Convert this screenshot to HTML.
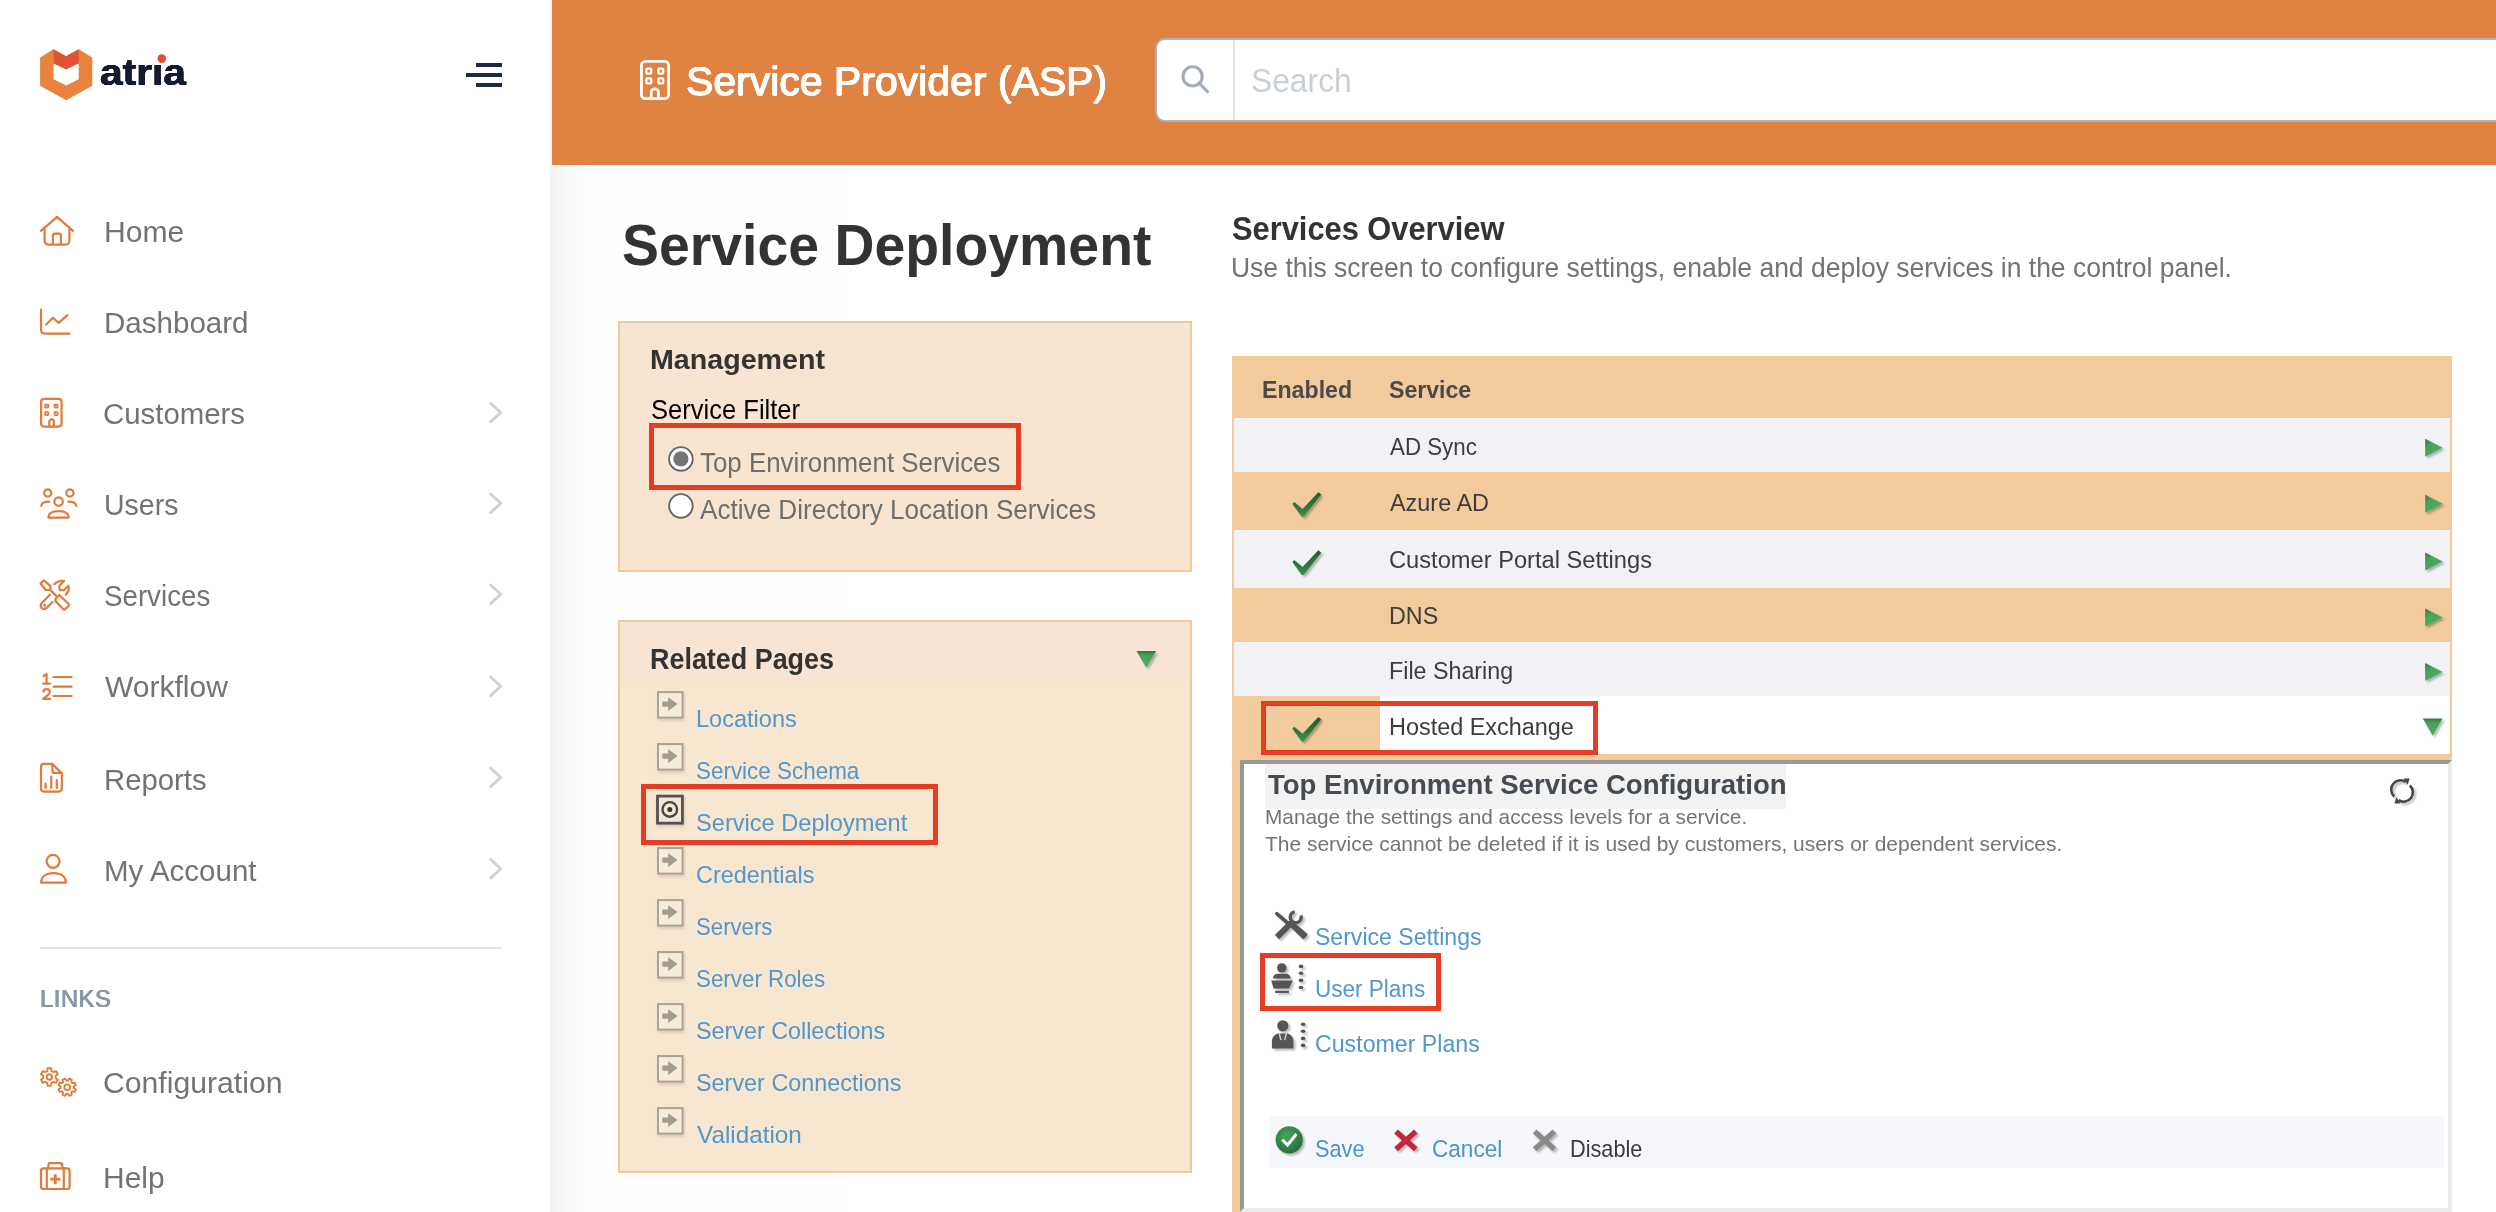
<!DOCTYPE html>
<html>
<head>
<meta charset="utf-8">
<style>
html,body{margin:0;padding:0;}
body{width:2496px;height:1212px;overflow:hidden;position:relative;background:#ffffff;font-family:"Liberation Sans",sans-serif;}
.a{position:absolute;box-sizing:border-box;}
.t{position:absolute;white-space:nowrap;transform-origin:0 0;font-family:"Liberation Sans",sans-serif;}
svg{position:absolute;overflow:visible;}
.red{position:absolute;box-sizing:border-box;border:5px solid #e53d24;}
</style>
</head>
<body>
<!-- sidebar -->
<div class="a" style="left:0;top:0;width:550px;height:1212px;background:#ffffff;"></div>
<!-- main bg -->
<div class="a" style="left:550px;top:165px;width:1946px;height:1047px;background:linear-gradient(to right,#f1f2f5 0px,#f5f6f7 8px,#f9fafa 20px,#fcfcfc 32px,#fefefe 44px,#ffffff 300px,#ffffff 100%);"></div>
<!-- header -->
<div class="a" style="left:550px;top:0;width:2px;height:165px;background:#f0f1f3;"></div>
<div class="a" style="left:552px;top:0;width:1944px;height:165px;background:#e08242;"></div>
<!-- search -->
<div class="a" style="left:1155px;top:38px;width:1400px;height:84px;background:#ffffff;border:2px solid #a9b3be;border-radius:10px 0 0 10px;"></div>
<div class="a" style="left:1233px;top:40px;width:2px;height:80px;background:#e0e4e9;"></div>

<svg width="2496" height="1212" style="left:0;top:0;" viewBox="0 0 2496 1212">
<!-- logo -->
<polygon points="40.1,57.6 53.5,49.2 66.1,56.3 78.7,49.2 92.3,57.6 92.3,85.8 66.1,100.3 40.1,85.8" fill="#e8823c"/>
<polygon points="53.5,49.2 66.1,56.3 78.7,49.2 78.7,63.5 66.1,69.6 53.5,63.5" fill="#df5233"/>
<polygon points="53.5,63.5 66.1,69.6 78.7,63.5 78.7,79.2 66.1,85.6 53.5,79.2" fill="#ffffff"/>
<circle cx="161.8" cy="58.6" r="4.3" fill="#e05035"/>
<!-- hamburger -->
<rect x="476" y="63" width="26" height="4" fill="#1c2a44"/>
<rect x="466" y="73" width="36" height="4" fill="#1c2a44"/>
<rect x="476" y="83" width="26" height="4" fill="#1c2a44"/>
<g fill="none" stroke="#e07b39" stroke-width="2.2" stroke-linecap="round" stroke-linejoin="round">
<!-- home -->
<path d="M41,230.8 L57,216.8 L73,230.8 M44.6,227 V240.6 Q44.6,244.6 48.6,244.6 H65.4 Q69.4,244.6 69.4,240.6 V227 M52.9,244.6 V235.4 Q52.9,233.6 54.7,233.6 H59.1 Q60.9,233.6 60.9,235.4 V244.6"/>
<!-- dashboard -->
<path d="M41,309.6 V329.5 Q41,333.6 45.1,333.6 H69.6 M46.3,324.6 L52.9,317.8 L58.5,322.8 L67.5,315.1"/>
<!-- customers -->
<rect x="41.1" y="398.8" width="20.4" height="27.8" rx="3"/>
<rect x="45.2" y="404.6" width="3" height="3" rx="0.5" stroke-width="1.9"/>
<rect x="54.6" y="404.6" width="3" height="3" rx="0.5" stroke-width="1.9"/>
<rect x="45.2" y="412.1" width="3" height="3" rx="0.5" stroke-width="1.9"/>
<rect x="54.6" y="412.1" width="3" height="3" rx="0.5" stroke-width="1.9"/>
<path d="M49.3,426.6 V421.7 A2.3,2.3 0 0 1 53.9,421.7 V426.6"/>
<!-- users -->
<circle cx="58.6" cy="501.5" r="4.2"/>
<circle cx="47.7" cy="493" r="3.6"/>
<circle cx="69.9" cy="493" r="3.6"/>
<path d="M41.2,505.8 Q41.6,501.6 49.2,501.6 M76.3,505.8 Q75.9,501.6 68.3,501.6"/>
<path d="M48.4,517.6 C48.4,513.3 52.6,511.2 58.6,511.2 C64.6,511.2 68.8,513.3 68.8,517.6 Z"/>
<!-- services tools -->
<path d="M40.6,583.6 L43.8,580.4 L50.4,585.9 L50.4,590 L45.8,590 Z M50.4,590 L56,595.6"/>
<path d="M59.3,595 L68.9,604.3 Q69.6,605 68.9,605.7 L64.9,609.4 Q64.2,610 63.5,609.4 L56.2,601.8 Q54.6,600 56.1,598.3 L57.5,596.9 Q58.4,596 59.3,595 Z"/>
<path d="M54.2,584.2 Q57.6,580.7 64,580.9 L59.2,585.9 L59.8,590.2 L63.8,590.2 L68.3,585.7 Q70.1,591 65.8,594.7"/>
<path d="M50.1,594.6 L41.8,603 Q39.7,605.6 41.6,607.8 Q44,610.2 46.6,607.9 L52.4,601.9"/>
<circle cx="44.6" cy="605.2" r="0.7" stroke-width="1.6"/>
<!-- workflow -->
<path d="M43.6,676 L46.6,673.9 V683.6 M43.2,683.6 H50 M43.4,691.6 Q43.8,689.2 46.6,689.2 Q49.8,689.2 49.8,691.9 Q49.8,693.6 47.8,695.2 L43.2,698.9 H50.2 M53.6,677 H71.6 M53.6,686.6 H71.6 M53.6,696 H71.6"/>
<!-- reports -->
<path d="M41,766.9 Q41,763.9 44,763.9 H52.3 L61.8,773.4 V788.6 Q61.8,791.6 58.8,791.6 H44 Q41,791.6 41,788.6 Z M52.3,763.9 V770.4 Q52.3,772.9 54.8,772.9 H61.8 M45.6,783.6 V788 M51.3,776.6 V788 M56.8,780.2 V788"/>
<!-- my account -->
<circle cx="53.1" cy="861.3" r="6.5"/>
<path d="M41.1,882.6 C41.1,876.6 46,873.1 53.5,873.1 C61,873.1 65.9,876.6 65.9,882.6 Z"/>
<!-- configuration -->
<path stroke-width="1.9" d="M47.27,1070.97 L47.63,1068.28 L51.17,1068.28 L51.53,1070.97 L53.56,1072.14 L56.07,1071.11 L57.84,1074.17 L55.69,1075.83 L55.69,1078.17 L57.84,1079.83 L56.07,1082.89 L53.56,1081.86 L51.53,1083.03 L51.17,1085.72 L47.63,1085.72 L47.27,1083.03 L45.24,1081.86 L42.73,1082.89 L40.96,1079.83 L43.11,1078.17 L43.11,1075.83 L40.96,1074.17 L42.73,1071.11 L45.24,1072.14 Z"/>
<circle cx="49.4" cy="1077" r="2.7" stroke-width="1.9"/>
<path stroke-width="1.9" d="M67.91,1080.64 L69.38,1078.57 L71.76,1079.56 L71.34,1082.06 L72.34,1083.06 L74.84,1082.64 L75.83,1085.02 L73.76,1086.49 L73.76,1087.91 L75.83,1089.38 L74.84,1091.76 L72.34,1091.34 L71.34,1092.34 L71.76,1094.84 L69.38,1095.83 L67.91,1093.76 L66.49,1093.76 L65.02,1095.83 L62.64,1094.84 L63.06,1092.34 L62.06,1091.34 L59.56,1091.76 L58.57,1089.38 L60.64,1087.91 L60.64,1086.49 L58.57,1085.02 L59.56,1082.64 L62.06,1083.06 L63.06,1082.06 L62.64,1079.56 L65.02,1078.57 L66.49,1080.64 Z"/>
<circle cx="67.2" cy="1087.2" r="2.8" stroke-width="1.9"/>
<!-- help -->
<rect x="41" y="1168.4" width="28.6" height="20.6" rx="2.6"/>
<path d="M48.4,1168.4 V1165 Q48.4,1163.2 50.2,1163.2 H60.4 Q62.2,1163.2 62.2,1165 V1168.4 M46.8,1168.4 V1189 M63.8,1168.4 V1189"/>
<path stroke-width="2.8" stroke-linecap="butt" d="M55.3,1174.2 V1184.2 M50.3,1179.2 H60.3"/>
</g>
<!-- chevrons -->
<g fill="none" stroke="#cdd1d8" stroke-width="2.9" stroke-linecap="round" stroke-linejoin="round">
<path d="M490.6,403.2 L500.8,412.5 L490.6,421.8"/>
<path d="M490.6,494 L500.8,503.3 L490.6,512.6"/>
<path d="M490.6,585 L500.8,594.3 L490.6,603.6"/>
<path d="M490.6,677 L500.8,686.3 L490.6,695.6"/>
<path d="M490.6,768.1 L500.8,777.4 L490.6,786.7"/>
<path d="M490.6,859.4 L500.8,868.7 L490.6,878"/>
</g>
<!-- divider -->
<rect x="40" y="947" width="462" height="2" fill="#e4e6ea"/>
<!-- header building icon -->
<g fill="none" stroke="#ffffff" stroke-width="2.8" stroke-linejoin="round">
<rect x="641.4" y="61.4" width="27.2" height="37.2" rx="4"/>
<rect x="646.4" y="68.6" width="4.8" height="5" rx="1" stroke-width="2.4"/>
<rect x="658.4" y="68.6" width="4.8" height="5" rx="1" stroke-width="2.4"/>
<rect x="646.4" y="78.4" width="4.8" height="5" rx="1" stroke-width="2.4"/>
<rect x="658.4" y="78.4" width="4.8" height="5" rx="1" stroke-width="2.4"/>
<path d="M651.2,98.6 V92.4 A3.6,3.6 0 0 1 658.4,92.4 V98.6"/>
</g>
<!-- search icon -->
<g fill="none" stroke="#a3adb8" stroke-width="3.1" stroke-linecap="round">
<circle cx="1192.6" cy="76.4" r="9.6"/>
<path d="M1200,84 L1207.4,91.6"/>
</g>
</svg>

<!-- management box -->
<div class="a" style="left:618px;top:321px;width:574px;height:251px;background:#f7e5d2;border:2px solid #f1ca9c;"></div>
<!-- related box -->
<div class="a" style="left:618px;top:620px;width:574px;height:553px;background:#f7e6d0;border:2px solid #f1ca9c;"></div>
<div class="a" style="left:620px;top:622px;width:570px;height:59px;background:#f7e4d4;"></div>

<!-- table -->
<div class="a" style="left:1232px;top:356px;width:1220px;height:404px;background:#f2ca9c;"></div>
<div class="a" style="left:1232px;top:760px;width:8px;height:452px;background:#f1ca9c;"></div>
<div class="a" style="left:1234px;top:418px;width:1216px;height:54px;background:#f2f2f6;"></div>
<div class="a" style="left:1234px;top:530px;width:1216px;height:58px;background:#f2f2f6;"></div>
<div class="a" style="left:1234px;top:642px;width:1216px;height:54px;background:#f2f2f6;"></div>
<div class="a" style="left:1380px;top:696px;width:1070px;height:58px;background:#ffffff;"></div>

<!-- config panel -->
<div class="a" style="left:1240px;top:760px;width:1212px;height:452px;background:#ffffff;border-style:solid;border-width:4px;border-color:#999999 #ebebeb #ebebeb #999999;"></div>
<div class="a" style="left:1265px;top:764px;width:521px;height:45px;background:#f2f2f2;"></div>
<div class="a" style="left:1269px;top:1116px;width:1175px;height:52px;background:#f6f7fb;"></div>

<svg width="2496" height="1212" style="left:0;top:0;" viewBox="0 0 2496 1212">
<defs>
<filter id="sh" x="-50%" y="-50%" width="200%" height="200%"><feGaussianBlur in="SourceAlpha" stdDeviation="1.2"/><feOffset dx="1.5" dy="2" result="b"/><feComponentTransfer><feFuncA type="linear" slope="0.28"/></feComponentTransfer><feMerge><feMergeNode/><feMergeNode in="SourceGraphic"/></feMerge></filter>
<linearGradient id="gtri" x1="0" y1="0" x2="0" y2="1"><stop offset="0" stop-color="#2f7a3e"/><stop offset="0.25" stop-color="#46a158"/><stop offset="1" stop-color="#52ab62"/></linearGradient>
<linearGradient id="gtri2" x1="0" y1="0" x2="1" y2="1"><stop offset="0" stop-color="#2f7a3e"/><stop offset="0.3" stop-color="#49a35a"/><stop offset="1" stop-color="#52ab62"/></linearGradient>
<linearGradient id="gchk" x1="0" y1="0" x2="0" y2="1"><stop offset="0" stop-color="#1d5a2b"/><stop offset="0.6" stop-color="#2c7a3b"/><stop offset="1" stop-color="#3a8f48"/></linearGradient>
<radialGradient id="gsave" cx="0.4" cy="0.35" r="0.7"><stop offset="0" stop-color="#46a35a"/><stop offset="1" stop-color="#23703a"/></radialGradient>
<filter id="sh2" x="-50%" y="-50%" width="200%" height="200%"><feGaussianBlur in="SourceAlpha" stdDeviation="1.5"/><feOffset dx="1" dy="1.5" result="b"/><feComponentTransfer><feFuncA type="linear" slope="0.14"/></feComponentTransfer><feMerge><feMergeNode/><feMergeNode in="SourceGraphic"/></feMerge></filter>
</defs>
<!-- radios -->
<circle cx="680.9" cy="458.9" r="11.8" fill="#ffffff" stroke="#666666" stroke-width="1.9"/>
<circle cx="680.9" cy="458.9" r="7.6" fill="#747474"/>
<circle cx="680.9" cy="505.9" r="11.8" fill="#ffffff" stroke="#666666" stroke-width="1.9"/>
<!-- related header triangle -->
<polygon points="1136.5,651.1 1156.1,651.1 1146.3,667.8" fill="url(#gtri)" filter="url(#sh)"/>
<!-- related page icons -->
<g>
<rect x="658" y="692.1" width="24.6" height="25.5" fill="#f6ecdc" stroke="#aba195" stroke-width="2" filter="url(#sh2)"/>
<path d="M662.4,701.6 H668.2 V697.2 L677.6,704.1 L668.2,711 V706.8 H662.4 Z" fill="#a39a8e"/>
</g>
<g transform="translate(0,52)">
<rect x="658" y="692.1" width="24.6" height="25.5" fill="#f6ecdc" stroke="#aba195" stroke-width="2" filter="url(#sh2)"/>
<path d="M662.4,701.6 H668.2 V697.2 L677.6,704.1 L668.2,711 V706.8 H662.4 Z" fill="#a39a8e"/>
</g>
<g transform="translate(0,156)">
<rect x="658" y="692.1" width="24.6" height="25.5" fill="#f6ecdc" stroke="#aba195" stroke-width="2" filter="url(#sh2)"/>
<path d="M662.4,701.6 H668.2 V697.2 L677.6,704.1 L668.2,711 V706.8 H662.4 Z" fill="#a39a8e"/>
</g>
<g transform="translate(0,208)">
<rect x="658" y="692.1" width="24.6" height="25.5" fill="#f6ecdc" stroke="#aba195" stroke-width="2" filter="url(#sh2)"/>
<path d="M662.4,701.6 H668.2 V697.2 L677.6,704.1 L668.2,711 V706.8 H662.4 Z" fill="#a39a8e"/>
</g>
<g transform="translate(0,260)">
<rect x="658" y="692.1" width="24.6" height="25.5" fill="#f6ecdc" stroke="#aba195" stroke-width="2" filter="url(#sh2)"/>
<path d="M662.4,701.6 H668.2 V697.2 L677.6,704.1 L668.2,711 V706.8 H662.4 Z" fill="#a39a8e"/>
</g>
<g transform="translate(0,312)">
<rect x="658" y="692.1" width="24.6" height="25.5" fill="#f6ecdc" stroke="#aba195" stroke-width="2" filter="url(#sh2)"/>
<path d="M662.4,701.6 H668.2 V697.2 L677.6,704.1 L668.2,711 V706.8 H662.4 Z" fill="#a39a8e"/>
</g>
<g transform="translate(0,364)">
<rect x="658" y="692.1" width="24.6" height="25.5" fill="#f6ecdc" stroke="#aba195" stroke-width="2" filter="url(#sh2)"/>
<path d="M662.4,701.6 H668.2 V697.2 L677.6,704.1 L668.2,711 V706.8 H662.4 Z" fill="#a39a8e"/>
</g>
<g transform="translate(0,416)">
<rect x="658" y="692.1" width="24.6" height="25.5" fill="#f6ecdc" stroke="#aba195" stroke-width="2" filter="url(#sh2)"/>
<path d="M662.4,701.6 H668.2 V697.2 L677.6,704.1 L668.2,711 V706.8 H662.4 Z" fill="#a39a8e"/>
</g>

<rect x="657.5" y="796.1" width="24.9" height="27.1" fill="#f2e6d6" stroke="#525252" stroke-width="2.8" filter="url(#sh2)"/>
<circle cx="669.8" cy="809.4" r="7.3" fill="none" stroke="#474747" stroke-width="2.4"/>
<circle cx="669.8" cy="809.4" r="2.5" fill="#333"/>
<!-- table checks -->
<g fill="url(#gchk)" filter="url(#sh)">
<polygon points="1292.4,504.0 1294.2,501.9 1302.5,509.0 1318.4,492.2 1321.2,494.6 1303.6,516.8 1301.8,516.8"/>
<polygon points="1292.4,562.1 1294.2,560.0 1302.5,567.1 1318.4,550.3 1321.2,552.7 1303.6,574.9 1301.8,574.9"/>
<polygon points="1292.4,728.8 1294.2,726.7 1302.5,733.8 1318.4,717.0 1321.2,719.4 1303.6,741.6 1301.8,741.6"/>
</g>
<!-- row triangles -->
<g fill="url(#gtri2)" filter="url(#sh)">
<polygon points="2425.2,438.8 2442.7,447.8 2425.2,456.8"/>
<polygon points="2425.2,494.8 2442.7,503.8 2425.2,512.8"/>
<polygon points="2425.2,552.6 2442.7,561.6 2425.2,570.6"/>
<polygon points="2425.2,608.6 2442.7,617.6 2425.2,626.6"/>
<polygon points="2425.2,663 2442.7,672 2425.2,681"/>
</g>
<polygon points="2422.8,718.6 2442.6,718.6 2432.7,735.8" fill="url(#gtri)" filter="url(#sh)"/>
<!-- refresh -->
<g fill="none" stroke="#474747" stroke-width="2.6" filter="url(#sh)">
<path d="M2394.2,796.5 A9.3,9.3 0 0 1 2405.5,781.8"/>
<path d="M2409.8,785.5 A9.3,9.3 0 0 1 2398.5,800.2"/>
</g>
<g fill="#474747">
<polygon points="2403.5,778.6 2409.6,778.6 2407.6,784.8"/>
<polygon points="2400.5,803.4 2394.4,803.4 2396.4,797.2"/>
</g>
<!-- config link icons -->
<g fill="#555555" stroke="none" filter="url(#sh)">
<!-- screwdriver -->
<path d="M1276.8,913.6 L1290.6,925.6" fill="none" stroke="#555555" stroke-width="3.6" stroke-linecap="round"/>
<path d="M1289.6,926.2 L1293.4,921.8 L1306.8,933.6 Q1307.8,934.6 1306.8,935.8 L1304.4,938.6 Q1303.4,939.6 1302.3,938.6 Z"/>
<!-- wrench -->
<path d="M1274.9,935 L1289.4,920.6 L1293.6,924.8 L1279.1,939.2 Z"/>
<path d="M1300.9,915.4 A5.5,5.5 0 1 1 1294.65,911.8" fill="none" stroke="#555555" stroke-width="3.3"/>
<!-- user plans -->
<circle cx="1281.8" cy="967.9" r="4.7"/>
<path d="M1272.9,978.4 Q1273.4,973.9 1278,973.7 H1285.6 Q1290.2,973.9 1290.6,978.4 Z"/>
<path d="M1271.2,980.6 H1292.9 L1289,988.4 H1273.6 Z"/>
<rect x="1275.2" y="990.8" width="13.7" height="2.2"/>
<ellipse cx="1301" cy="966.4" rx="2.3" ry="1.8"/>
<ellipse cx="1301" cy="973.3" rx="2.3" ry="1.8"/>
<ellipse cx="1301" cy="980.4" rx="2.3" ry="1.8"/>
<ellipse cx="1301" cy="987.5" rx="2.3" ry="1.8"/>
<!-- customer plans -->
<circle cx="1282.8" cy="1025.8" r="5.6"/>
<path d="M1271.9,1048.6 V1041.5 Q1272,1035.2 1277.8,1033.4 H1287.8 Q1293.4,1035.2 1293.4,1041.5 V1048.6 Z"/>
<ellipse cx="1303.1" cy="1024.2" rx="2.3" ry="1.8"/>
<ellipse cx="1303.1" cy="1031.3" rx="2.3" ry="1.8"/>
<ellipse cx="1303.1" cy="1038.4" rx="2.3" ry="1.8"/>
<ellipse cx="1303.1" cy="1045.4" rx="2.3" ry="1.8"/>
</g>
<path d="M1279.2,1033.2 L1280.9,1040.2 M1286.4,1033.2 L1284.7,1040.2" fill="none" stroke="#d8d8d8" stroke-width="1.4"/>
<path d="M1280.6,1024 Q1282.8,1022.5 1285,1024" fill="none" stroke="#6a6a6a" stroke-width="0.8"/>
<!-- save / cancel / disable -->
<g filter="url(#sh)">
<circle cx="1289.2" cy="1139.8" r="13.6" fill="url(#gsave)"/>
<path d="M1282.3,1139.6 L1287.6,1145 L1296.4,1134" fill="none" stroke="#ffffff" stroke-width="3"/>
<path d="M1396,1131.4 L1415.8,1149.2 M1415.8,1131.4 L1396,1149.2" fill="none" stroke="#c2283c" stroke-width="5.4"/>
<path d="M1534.6,1131.4 L1554.4,1149.2 M1554.4,1131.4 L1534.6,1149.2" fill="none" stroke="#8a8a8a" stroke-width="5.4"/>
</g>
</svg>

<!-- red highlight boxes -->
<div class="red" style="left:649px;top:423px;width:372px;height:67px;"></div>
<div class="red" style="left:641px;top:784px;width:297px;height:61px;"></div>
<div class="red" style="left:1261px;top:701px;width:337px;height:54px;"></div>
<div class="red" style="left:1260px;top:953px;width:181px;height:58px;"></div>

<div class="t" id="nav_home" style="left:103.58px;top:217.00px;font-size:29.28px;line-height:29.28px;font-weight:400;color:#737373;transform:scaleX(1.0290);">Home</div>
<div class="t" id="nav_dash" style="left:103.64px;top:308.00px;font-size:29.57px;line-height:29.57px;font-weight:400;color:#737373;transform:scaleX(0.9992);">Dashboard</div>
<div class="t" id="nav_cust" style="left:103.48px;top:399.00px;font-size:29.86px;line-height:29.86px;font-weight:400;color:#737373;transform:scaleX(0.9839);">Customers</div>
<div class="t" id="nav_users" style="left:104.11px;top:490.00px;font-size:29.57px;line-height:29.57px;font-weight:400;color:#737373;transform:scaleX(0.9635);">Users</div>
<div class="t" id="nav_serv" style="left:104.27px;top:581.00px;font-size:29.57px;line-height:29.57px;font-weight:400;color:#737373;transform:scaleX(0.9373);">Services</div>
<div class="t" id="nav_work" style="left:105.28px;top:672.00px;font-size:29.57px;line-height:29.57px;font-weight:400;color:#737373;transform:scaleX(1.0157);">Workflow</div>
<div class="t" id="nav_rep" style="left:103.55px;top:765.00px;font-size:29.57px;line-height:29.57px;font-weight:400;color:#737373;transform:scaleX(0.9919);">Reports</div>
<div class="t" id="nav_acc" style="left:103.54px;top:856.00px;font-size:29.57px;line-height:29.57px;font-weight:400;color:#737373;transform:scaleX(0.9981);">My Account</div>
<div class="t" id="links" style="left:40.25px;top:988.00px;font-size:23.04px;line-height:23.04px;font-weight:400;color:#8798ab;transform:scaleX(1.0331);text-shadow:0.45px 0 0 #8798ab,-0.45px 0 0 #8798ab,0 0.3px 0 #8798ab,0 -0.3px 0 #8798ab;letter-spacing:0.5px;">LINKS</div>
<div class="t" id="nav_conf" style="left:103.44px;top:1068.00px;font-size:29.86px;line-height:29.86px;font-weight:400;color:#737373;transform:scaleX(1.0103);">Configuration</div>
<div class="t" id="nav_help" style="left:103.00px;top:1163.00px;font-size:29.57px;line-height:29.57px;font-weight:400;color:#737373;transform:scaleX(1.0132);">Help</div>
<div class="t" id="hdr" style="left:686.02px;top:60.00px;font-size:41.45px;line-height:41.45px;font-weight:400;color:#ffffff;transform:scaleX(0.9884);text-shadow:0.5px 0 0 #ffffff,-0.5px 0 0 #ffffff,0 0.5px 0 #ffffff,0 -0.5px 0 #ffffff,0.35px 0.35px 0 #ffffff,-0.35px -0.35px 0 #ffffff,0.35px -0.35px 0 #ffffff,-0.35px 0.35px 0 #ffffff;">Service Provider (ASP)</div>
<div class="t" id="search" style="left:1250.78px;top:65.00px;font-size:32.90px;line-height:32.90px;font-weight:400;color:#c9cfd7;transform:scaleX(0.9663);">Search</div>
<div class="t" id="title" style="left:621.70px;top:217.00px;font-size:57.97px;line-height:57.97px;font-weight:700;color:#333333;transform:scaleX(0.9554);">Service Deployment</div>
<div class="t" id="mgmt" style="left:649.78px;top:345.00px;font-size:28.55px;line-height:28.55px;font-weight:700;color:#333333;transform:scaleX(1.0029);">Management</div>
<div class="t" id="filter" style="left:651.22px;top:396.00px;font-size:27.97px;line-height:27.97px;font-weight:400;color:#000000;transform:scaleX(0.9133);">Service Filter</div>
<div class="t" id="radio1" style="left:700.00px;top:449.00px;font-size:27.25px;line-height:27.25px;font-weight:400;color:#6e6e6e;transform:scaleX(0.9491);">Top Environment Services</div>
<div class="t" id="radio2" style="left:699.95px;top:496.00px;font-size:27.54px;line-height:27.54px;font-weight:400;color:#6e6e6e;transform:scaleX(0.9481);">Active Directory Location Services</div>
<div class="t" id="related" style="left:649.59px;top:645.00px;font-size:28.99px;line-height:28.99px;font-weight:700;color:#333333;transform:scaleX(0.9286);">Related Pages</div>
<div class="t" id="rel0" style="left:695.50px;top:707.00px;font-size:24.78px;line-height:24.78px;font-weight:400;color:#5297cb;transform:scaleX(0.9509);">Locations</div>
<div class="t" id="rel1" style="left:695.68px;top:759.00px;font-size:24.78px;line-height:24.78px;font-weight:400;color:#5297cb;transform:scaleX(0.9057);">Service Schema</div>
<div class="t" id="rel2" style="left:695.60px;top:811.00px;font-size:24.78px;line-height:24.78px;font-weight:400;color:#5297cb;transform:scaleX(0.9534);">Service Deployment</div>
<div class="t" id="rel3" style="left:695.79px;top:863.00px;font-size:24.78px;line-height:24.78px;font-weight:400;color:#5297cb;transform:scaleX(0.9455);">Credentials</div>
<div class="t" id="rel4" style="left:695.70px;top:915.00px;font-size:24.78px;line-height:24.78px;font-weight:400;color:#5297cb;transform:scaleX(0.8958);">Servers</div>
<div class="t" id="rel5" style="left:695.69px;top:967.00px;font-size:24.78px;line-height:24.78px;font-weight:400;color:#5297cb;transform:scaleX(0.9026);">Server Roles</div>
<div class="t" id="rel6" style="left:695.62px;top:1019.00px;font-size:24.78px;line-height:24.78px;font-weight:400;color:#5297cb;transform:scaleX(0.9415);">Server Collections</div>
<div class="t" id="rel7" style="left:695.61px;top:1071.00px;font-size:24.78px;line-height:24.78px;font-weight:400;color:#5297cb;transform:scaleX(0.9445);">Server Connections</div>
<div class="t" id="rel8" style="left:696.61px;top:1123.00px;font-size:24.78px;line-height:24.78px;font-weight:400;color:#5297cb;transform:scaleX(0.9805);">Validation</div>
<div class="t" id="so" style="left:1231.57px;top:212.00px;font-size:33.33px;line-height:33.33px;font-weight:700;color:#333333;transform:scaleX(0.9247);">Services Overview</div>
<div class="t" id="sub" style="left:1231.15px;top:254.00px;font-size:27.54px;line-height:27.54px;font-weight:400;color:#737373;transform:scaleX(0.9618);">Use this screen to configure settings, enable and deploy services in the control panel.</div>
<div class="t" id="th1" style="left:1261.94px;top:378.00px;font-size:24.64px;line-height:24.64px;font-weight:700;color:#4a4a4a;transform:scaleX(0.9408);">Enabled</div>
<div class="t" id="th2" style="left:1389.08px;top:378.00px;font-size:24.64px;line-height:24.64px;font-weight:700;color:#4a4a4a;transform:scaleX(0.9380);">Service</div>
<div class="t" id="row0" style="left:1389.98px;top:435.00px;font-size:24.64px;line-height:24.64px;font-weight:400;color:#3d3d3d;transform:scaleX(0.9064);">AD Sync</div>
<div class="t" id="row1" style="left:1389.95px;top:491.00px;font-size:24.64px;line-height:24.64px;font-weight:400;color:#3d3d3d;transform:scaleX(0.9513);">Azure AD</div>
<div class="t" id="row2" style="left:1389.07px;top:548.00px;font-size:24.64px;line-height:24.64px;font-weight:400;color:#3d3d3d;transform:scaleX(0.9608);">Customer Portal Settings</div>
<div class="t" id="row3" style="left:1388.81px;top:604.00px;font-size:24.64px;line-height:24.64px;font-weight:400;color:#3d3d3d;transform:scaleX(0.9455);">DNS</div>
<div class="t" id="row4" style="left:1388.81px;top:659.00px;font-size:24.64px;line-height:24.64px;font-weight:400;color:#3d3d3d;transform:scaleX(0.9446);">File Sharing</div>
<div class="t" id="row5" style="left:1388.80px;top:715.00px;font-size:24.64px;line-height:24.64px;font-weight:400;color:#3d3d3d;transform:scaleX(0.9507);">Hosted Exchange</div>
<div class="t" id="ctitle" style="left:1267.95px;top:770.00px;font-size:28.41px;line-height:28.41px;font-weight:700;color:#444b52;transform:scaleX(0.9702);">Top Environment Service Configuration</div>
<div class="t" id="desc1" style="left:1265.01px;top:806.00px;font-size:21.01px;line-height:21.01px;font-weight:400;color:#747474;transform:scaleX(0.9906);">Manage the settings and access levels for a service.</div>
<div class="t" id="desc2" style="left:1265.48px;top:834.00px;font-size:20.87px;line-height:20.87px;font-weight:400;color:#747474;transform:scaleX(1.0054);">The service cannot be deleted if it is used by customers, users or dependent services.</div>
<div class="t" id="cl1" style="left:1315.02px;top:925.00px;font-size:24.49px;line-height:24.49px;font-weight:400;color:#5297cb;transform:scaleX(0.9413);">Service Settings</div>
<div class="t" id="cl2" style="left:1315.21px;top:977.00px;font-size:24.49px;line-height:24.49px;font-weight:400;color:#5297cb;transform:scaleX(0.9198);">User Plans</div>
<div class="t" id="cl3" style="left:1315.19px;top:1032.00px;font-size:24.49px;line-height:24.49px;font-weight:400;color:#5297cb;transform:scaleX(0.9462);">Customer Plans</div>
<div class="t" id="save" style="left:1315.33px;top:1137.00px;font-size:24.78px;line-height:24.78px;font-weight:400;color:#4a94c8;transform:scaleX(0.8771);">Save</div>
<div class="t" id="cancel" style="left:1432.45px;top:1137.00px;font-size:24.78px;line-height:24.78px;font-weight:400;color:#4a94c8;transform:scaleX(0.9113);">Cancel</div>
<div class="t" id="disable" style="left:1570.00px;top:1138.00px;font-size:23.19px;line-height:23.19px;font-weight:400;color:#3a3a3a;transform:scaleX(0.9366);">Disable</div>
<div class="t" id="logo" style="left:99.88px;top:54.00px;font-size:37.54px;line-height:37.54px;font-weight:700;color:#151a33;transform:scaleX(1.0835);text-shadow:0.35px 0 0 #151a33,-0.35px 0 0 #151a33,0 0.35px 0 #151a33,0 -0.35px 0 #151a33;">atrıa</div>
</body>
</html>
